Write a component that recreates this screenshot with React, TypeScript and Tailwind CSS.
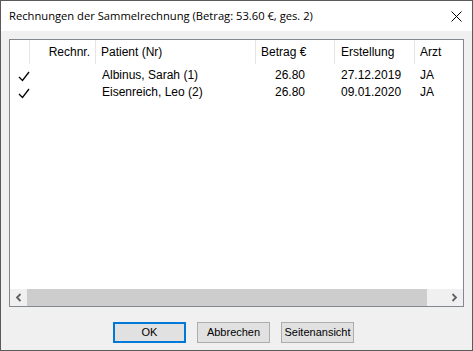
const rows = [
  { patient: "Albinus, Sarah (1)", betrag: "26.80", datum: "27.12.2019", arzt: "JA" },
  { patient: "Eisenreich, Leo (2)", betrag: "26.80", datum: "09.01.2020", arzt: "JA" },
];

function Check() {
  return (
    <svg width="12" height="11" viewBox="0 0 12 11" className="block">
      <path d="M1 6 L4.5 9.5 L11 1" fill="none" stroke="#000" strokeWidth="1.3" />
    </svg>
  );
}

export default function App() {
  return (
    <div className="flex h-[351px] w-[473px] flex-col border border-[#5b5b5b] bg-[#f0f0f0] font-['Liberation_Sans',Arial,sans-serif] text-[12px] text-black">
      {/* title bar */}
      <div className="flex h-[30px] shrink-0 items-center justify-between bg-white pl-[8px] pr-[10px]">
        <span className="font-['Open_Sans',sans-serif] text-[11.2px]">
          Rechnungen der Sammelrechnung (Betrag: 53.60 €, ges. 2)
        </span>
        <svg width="11" height="11" viewBox="0 0 11 11">
          <path d="M0.5 0.5 L10.5 10.5 M10.5 0.5 L0.5 10.5" stroke="#000" strokeWidth="1" />
        </svg>
      </div>

      {/* list */}
      <div className="mx-[8px] mt-[8px] flex h-[268px] flex-col border border-[#828790] bg-white">
        <div className="flex h-[24px] shrink-0 items-center">
          <div className="h-full w-[20px] border-r border-[#e5e5e5]" />
          <div className="flex h-full w-[66px] items-center justify-end border-r border-[#e5e5e5] pr-[5px]">Rechnr.</div>
          <div className="flex h-full w-[160px] items-center border-r border-[#e5e5e5] pl-[5px]">Patient (Nr)</div>
          <div className="flex h-full w-[79px] items-center border-r border-[#e5e5e5] pl-[5px]">Betrag €</div>
          <div className="flex h-full w-[80px] items-center border-r border-[#e5e5e5] pl-[6px]">Erstellung</div>
          <div className="flex h-full items-center pl-[5px]">Arzt</div>
        </div>
        <div className="flex-1 pt-[2px]">
          {rows.map((r) => (
            <div key={r.patient} className="flex h-[17px] items-center">
              <div className="flex w-[20px] justify-end pt-[4px]">
                <Check />
              </div>
              <div className="w-[66px]" />
              <div className="w-[160px] pl-[6px]">{r.patient}</div>
              <div className="w-[79px] pr-[30px] text-right">{r.betrag}</div>
              <div className="w-[80px] pl-[6px]">{r.datum}</div>
              <div className="pl-[5px]">{r.arzt}</div>
            </div>
          ))}
        </div>
        {/* horizontal scrollbar */}
        <div className="flex h-[17px] shrink-0 items-center bg-[#f0f0f0]">
          <div className="flex h-full w-[17px] items-center justify-center">
            <svg width="7" height="9" viewBox="0 0 7 9">
              <path d="M5.5 1 L2 4.5 L5.5 8" fill="none" stroke="#606060" strokeWidth="1.8" />
            </svg>
          </div>
          <div className="h-full w-[400px] bg-[#cdcdcd]" />
          <div className="flex-1" />
          <div className="flex h-full w-[17px] items-center justify-center">
            <svg width="7" height="9" viewBox="0 0 7 9">
              <path d="M1.5 1 L5 4.5 L1.5 8" fill="none" stroke="#606060" strokeWidth="1.8" />
            </svg>
          </div>
        </div>
      </div>

      {/* buttons */}
      <div className="mt-[15px] flex gap-[11px] pl-[112px] text-[11px]">
        <button className="h-[21px] w-[73px] border-2 border-[#0078d7] bg-[#e1e1e1]">OK</button>
        <button className="h-[21px] w-[73px] border border-[#adadad] bg-[#e1e1e1]">Abbrechen</button>
        <button className="h-[21px] w-[73px] border border-[#adadad] bg-[#e1e1e1]">Seitenansicht</button>
      </div>
    </div>
  );
}
